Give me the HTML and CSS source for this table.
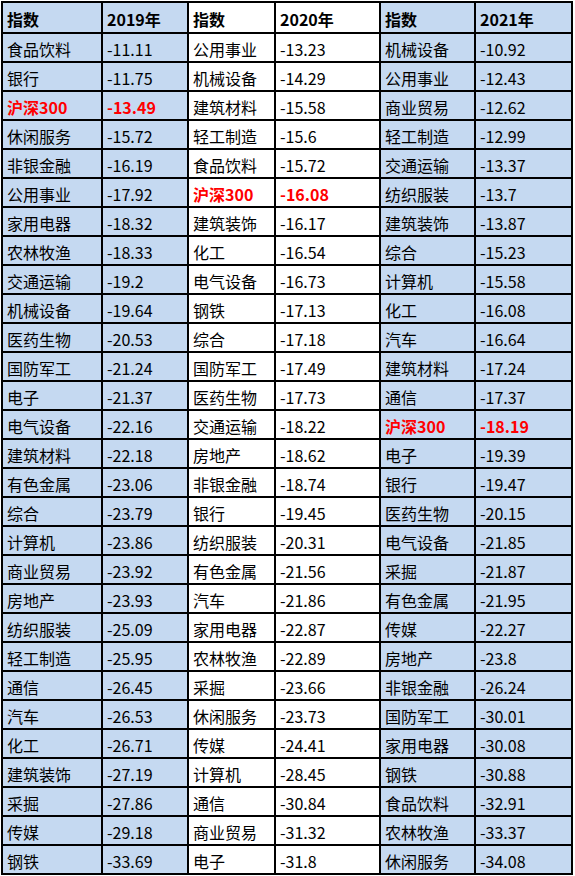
FILE: index.html
```html
<!DOCTYPE html>
<html lang="zh-CN">
<head>
<meta charset="utf-8">
<link rel="stylesheet" href="styles.css">
</head>
<body>
<table class="grid">
<colgroup>
<col class="c1"><col class="c2"><col class="c3"><col class="c4"><col class="c5"><col class="c6">
</colgroup>
<thead>
<tr class="head"><th class="blue">指数</th><th class="blue">2019年</th><th class="white">指数</th><th class="white">2020年</th><th class="blue">指数</th><th class="blue">2021年</th></tr>
</thead>
<tbody>
<tr><td class="blue">食品饮料</td><td class="blue">-11.11</td><td class="white">公用事业</td><td class="white">-13.23</td><td class="blue">机械设备</td><td class="blue">-10.92</td></tr>
<tr><td class="blue">银行</td><td class="blue">-11.75</td><td class="white">机械设备</td><td class="white">-14.29</td><td class="blue">公用事业</td><td class="blue">-12.43</td></tr>
<tr><td class="blue hl">沪深300</td><td class="blue hl">-13.49</td><td class="white">建筑材料</td><td class="white">-15.58</td><td class="blue">商业贸易</td><td class="blue">-12.62</td></tr>
<tr><td class="blue">休闲服务</td><td class="blue">-15.72</td><td class="white">轻工制造</td><td class="white">-15.6</td><td class="blue">轻工制造</td><td class="blue">-12.99</td></tr>
<tr><td class="blue">非银金融</td><td class="blue">-16.19</td><td class="white">食品饮料</td><td class="white">-15.72</td><td class="blue">交通运输</td><td class="blue">-13.37</td></tr>
<tr><td class="blue">公用事业</td><td class="blue">-17.92</td><td class="white hl">沪深300</td><td class="white hl">-16.08</td><td class="blue">纺织服装</td><td class="blue">-13.7</td></tr>
<tr><td class="blue">家用电器</td><td class="blue">-18.32</td><td class="white">建筑装饰</td><td class="white">-16.17</td><td class="blue">建筑装饰</td><td class="blue">-13.87</td></tr>
<tr><td class="blue">农林牧渔</td><td class="blue">-18.33</td><td class="white">化工</td><td class="white">-16.54</td><td class="blue">综合</td><td class="blue">-15.23</td></tr>
<tr><td class="blue">交通运输</td><td class="blue">-19.2</td><td class="white">电气设备</td><td class="white">-16.73</td><td class="blue">计算机</td><td class="blue">-15.58</td></tr>
<tr><td class="blue">机械设备</td><td class="blue">-19.64</td><td class="white">钢铁</td><td class="white">-17.13</td><td class="blue">化工</td><td class="blue">-16.08</td></tr>
<tr><td class="blue">医药生物</td><td class="blue">-20.53</td><td class="white">综合</td><td class="white">-17.18</td><td class="blue">汽车</td><td class="blue">-16.64</td></tr>
<tr><td class="blue">国防军工</td><td class="blue">-21.24</td><td class="white">国防军工</td><td class="white">-17.49</td><td class="blue">建筑材料</td><td class="blue">-17.24</td></tr>
<tr><td class="blue">电子</td><td class="blue">-21.37</td><td class="white">医药生物</td><td class="white">-17.73</td><td class="blue">通信</td><td class="blue">-17.37</td></tr>
<tr><td class="blue">电气设备</td><td class="blue">-22.16</td><td class="white">交通运输</td><td class="white">-18.22</td><td class="blue hl">沪深300</td><td class="blue hl">-18.19</td></tr>
<tr><td class="blue">建筑材料</td><td class="blue">-22.18</td><td class="white">房地产</td><td class="white">-18.62</td><td class="blue">电子</td><td class="blue">-19.39</td></tr>
<tr><td class="blue">有色金属</td><td class="blue">-23.06</td><td class="white">非银金融</td><td class="white">-18.74</td><td class="blue">银行</td><td class="blue">-19.47</td></tr>
<tr><td class="blue">综合</td><td class="blue">-23.79</td><td class="white">银行</td><td class="white">-19.45</td><td class="blue">医药生物</td><td class="blue">-20.15</td></tr>
<tr><td class="blue">计算机</td><td class="blue">-23.86</td><td class="white">纺织服装</td><td class="white">-20.31</td><td class="blue">电气设备</td><td class="blue">-21.85</td></tr>
<tr><td class="blue">商业贸易</td><td class="blue">-23.92</td><td class="white">有色金属</td><td class="white">-21.56</td><td class="blue">采掘</td><td class="blue">-21.87</td></tr>
<tr><td class="blue">房地产</td><td class="blue">-23.93</td><td class="white">汽车</td><td class="white">-21.86</td><td class="blue">有色金属</td><td class="blue">-21.95</td></tr>
<tr><td class="blue">纺织服装</td><td class="blue">-25.09</td><td class="white">家用电器</td><td class="white">-22.87</td><td class="blue">传媒</td><td class="blue">-22.27</td></tr>
<tr><td class="blue">轻工制造</td><td class="blue">-25.95</td><td class="white">农林牧渔</td><td class="white">-22.89</td><td class="blue">房地产</td><td class="blue">-23.8</td></tr>
<tr><td class="blue">通信</td><td class="blue">-26.45</td><td class="white">采掘</td><td class="white">-23.66</td><td class="blue">非银金融</td><td class="blue">-26.24</td></tr>
<tr><td class="blue">汽车</td><td class="blue">-26.53</td><td class="white">休闲服务</td><td class="white">-23.73</td><td class="blue">国防军工</td><td class="blue">-30.01</td></tr>
<tr><td class="blue">化工</td><td class="blue">-26.71</td><td class="white">传媒</td><td class="white">-24.41</td><td class="blue">家用电器</td><td class="blue">-30.08</td></tr>
<tr><td class="blue">建筑装饰</td><td class="blue">-27.19</td><td class="white">计算机</td><td class="white">-28.45</td><td class="blue">钢铁</td><td class="blue">-30.88</td></tr>
<tr><td class="blue">采掘</td><td class="blue">-27.86</td><td class="white">通信</td><td class="white">-30.84</td><td class="blue">食品饮料</td><td class="blue">-32.91</td></tr>
<tr><td class="blue">传媒</td><td class="blue">-29.18</td><td class="white">商业贸易</td><td class="white">-31.32</td><td class="blue">农林牧渔</td><td class="blue">-33.37</td></tr>
<tr><td class="blue">钢铁</td><td class="blue">-33.69</td><td class="white">电子</td><td class="white">-31.8</td><td class="blue">休闲服务</td><td class="blue">-34.08</td></tr>
</tbody>
</table>
</body>
</html>
```
FILE: styles.css
```css
html, body {
  margin: 0;
  padding: 0;
  background: #ffffff;
}
body {
  padding: 1px 0 0 1px;
  font-family: "Noto Sans CJK SC", "Noto Sans", sans-serif;
  font-size: 16px;
  color: #000000;
}
.grid {
  border-collapse: collapse;
  table-layout: fixed;
  width: 571px;
}
.c1 { width: 100px; }
.c2 { width: 86px; }
.c3 { width: 87px; }
.c4 { width: 105px; }
.c5 { width: 95px; }
.c6 { width: 97px; }
.grid th, .grid td {
  border: 2px solid #000;
  padding: 0 0 0 4px;
  text-align: left;
  vertical-align: bottom;
  line-height: 22px;
  white-space: nowrap;
  overflow: hidden;
}
.grid th {
  height: 27px;
  font-weight: 700;
  padding-bottom: 2px;
}
.grid td {
  height: 26px;
  padding-bottom: 1px;
}
.blue { background: #c5d9f1; }
.white { background: #ffffff; }
.hl {
  color: #ff0000;
  font-weight: 700;
}
```
